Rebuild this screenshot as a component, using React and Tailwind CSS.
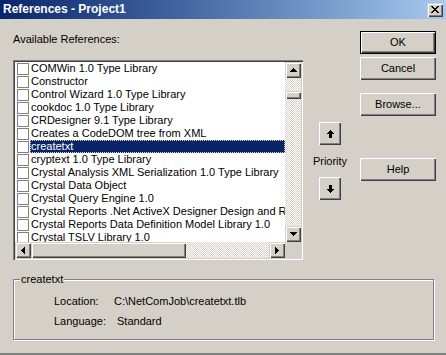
import React from "react";

const refs = [
  "COMWin 1.0 Type Library",
  "Constructor",
  "Control Wizard 1.0 Type Library",
  "cookdoc 1.0 Type Library",
  "CRDesigner 9.1 Type Library",
  "Creates a CodeDOM tree from XML",
  "createtxt",
  "cryptext 1.0 Type Library",
  "Crystal Analysis XML Serialization 1.0 Type Library",
  "Crystal Data Object",
  "Crystal Query Engine 1.0",
  "Crystal Reports .Net ActiveX Designer Design and Runtime",
  "Crystal Reports Data Definition Model Library 1.0",
  "Crystal TSLV Library 1.0",
];

const bevel =
  "shadow-[inset_1px_1px_0_#d4d0c8,inset_2px_2px_0_#ffffff,inset_-1px_-1px_0_#404040,inset_-2px_-2px_0_#808080]";
const btnBevel =
  "shadow-[inset_1px_1px_0_#ffffff,inset_-1px_-1px_0_#404040,inset_-2px_-2px_0_#808080]";
const checker =
  "bg-[repeating-conic-gradient(#d4d0c8_0%_25%,#ffffff_0%_50%)] bg-[length:2px_2px]";

const Pix = ({ w, h, d }) => (
  <svg width={w} height={h} viewBox={`0 0 ${w} ${h}`} shapeRendering="crispEdges">
    <path d={d} fill="#000" />
  </svg>
);

const ArrowUp = () => <Pix w={7} h={4} d="M3 0h1v1h-1z M2 1h3v1h-3z M1 2h5v1h-5z M0 3h7v1h-7z" />;
const ArrowDown = () => <Pix w={7} h={4} d="M0 0h7v1h-7z M1 1h5v1h-5z M2 2h3v1h-3z M3 3h1v1h-1z" />;
const ArrowLeft = () => <Pix w={4} h={7} d="M0 3h1v1h-1z M1 2h1v3h-1z M2 1h1v5h-1z M3 0h1v7h-1z" />;
const ArrowRight = () => <Pix w={4} h={7} d="M0 0h1v7h-1z M1 1h1v5h-1z M2 2h1v3h-1z M3 3h1v1h-1z" />;

const ScrollBtn = ({ children }) => (
  <div className={`w-[16px] h-[16px] shrink-0 bg-[#d4d0c8] flex items-center justify-center ${bevel}`}>
    {children}
  </div>
);

const Button = ({ children, def, className = "" }) => (
  <div className={`w-[76px] h-[23px] bg-[#d4d0c8] ${def ? "border border-black" : ""} ${className}`}>
    <div className={`w-full h-full flex items-center justify-center text-[11px] ${btnBevel}`}>
      {children}
    </div>
  </div>
);

const PriorityBtn = ({ up }) => (
  <div className={`w-[22px] h-[23px] bg-[#d4d0c8] flex items-center justify-center ${btnBevel}`}>
    {up ? (
      <Pix w={7} h={8} d="M3 0h1v1h-1z M2 1h3v1h-3z M1 2h5v1h-5z M0 3h7v1h-7z M2 4h3v4h-3z" />
    ) : (
      <Pix w={7} h={8} d="M2 0h3v4h-3z M0 4h7v1h-7z M1 5h5v1h-5z M2 6h3v1h-3z M3 7h1v1h-1z" />
    )}
  </div>
);

const Row = ({ label, selected }) => (
  <div className="h-[13px] flex items-center shrink-0">
    <div className="w-[12px] h-[12px] ml-[2px] border border-[#808080] bg-white shrink-0" />
    <div
      className={`ml-[1px] h-[13px] flex-1 pl-[1px] leading-[13px] whitespace-nowrap overflow-hidden ${
        selected
          ? "bg-[#0a246a] text-white outline-1 outline-dotted outline-[#e8d890] -outline-offset-1"
          : ""
      }`}
    >
      {label}
    </div>
  </div>
);

export default function App() {
  return (
    <div className="w-[446px] h-[355px] bg-[#d4d0c8] flex flex-col font-['Liberation_Sans',Arial,sans-serif] text-[11px] text-black overflow-hidden shadow-[inset_0_-2px_0_#808080]">
      {/* Title bar */}
      <div className="h-[19px] shrink-0 flex items-center bg-linear-to-r from-[#0a246a] to-[#a6caf0] pl-[3px] pr-[3px]">
        <span className="text-white font-bold text-[12px] leading-[19px] flex-1">References - Project1</span>
        <div className={`w-[16px] h-[14px] bg-[#d4d0c8] flex items-center justify-center ${bevel}`}>
          <Pix
            w={8}
            h={7}
            d="M0 0h2v1h-2z M6 0h2v1h-2z M1 1h2v1h-2z M5 1h2v1h-2z M2 2h4v1h-4z M3 3h2v1h-2z M2 4h4v1h-4z M1 5h2v1h-2z M5 5h2v1h-2z M0 6h2v1h-2z M6 6h2v1h-2z"
          />
        </div>
      </div>

      {/* Body */}
      <div className="flex pl-[13px] shrink-0">
        {/* Left: list */}
        <div className="w-[290px] flex flex-col">
          <div className="mt-[14px] h-[13px] leading-[13px]">Available References:</div>
          <div className="mt-[14px] h-[200px] p-[2px] shadow-[inset_1px_1px_0_#808080,inset_2px_2px_0_#404040,inset_-1px_-1px_0_#ffffff,inset_-2px_-2px_0_#d4d0c8]">
            <div className="w-full h-full flex flex-col bg-white">
              <div className="flex h-[180px]">
                <div className="flex-1 flex flex-col overflow-hidden">
                  {refs.map((r) => (
                    <Row key={r} label={r} selected={r === "createtxt"} />
                  ))}
                </div>
                <div className="w-[16px] flex flex-col">
                  <ScrollBtn>
                    <ArrowUp />
                  </ScrollBtn>
                  <div className={`h-[13px] ${checker}`} />
                  <div className={`h-[8px] bg-[#d4d0c8] ${bevel}`} />
                  <div className={`flex-1 ${checker}`} />
                  <ScrollBtn>
                    <ArrowDown />
                  </ScrollBtn>
                </div>
              </div>
              <div className="flex h-[16px]">
                <ScrollBtn>
                  <ArrowLeft />
                </ScrollBtn>
                <div className={`w-[155px] bg-[#d4d0c8] ${bevel}`} />
                <div className={`flex-1 ${checker}`} />
                <ScrollBtn>
                  <ArrowRight />
                </ScrollBtn>
                <div className="w-[16px] bg-[#d4d0c8]" />
              </div>
            </div>
          </div>
        </div>

        {/* Middle: priority */}
        <div className="w-[57px] flex flex-col items-center pr-[3px]">
          <div className="mt-[103px]">
            <PriorityBtn up />
          </div>
          <div className="mt-[10px] h-[13px] leading-[13px]">Priority</div>
          <div className="mt-[9px]">
            <PriorityBtn />
          </div>
        </div>

        {/* Right: buttons */}
        <div className="flex flex-col">
          <Button def className="mt-[12px]">OK</Button>
          <Button className="mt-[3px]">Cancel</Button>
          <Button className="mt-[13px]">Browse...</Button>
          <Button className="mt-[42px]">Help</Button>
        </div>
      </div>

      {/* Group box */}
      <div className="relative ml-[13px] mt-[19px] w-[421px] h-[61px] border border-[#808080] shadow-[1px_1px_0_#ffffff,inset_1px_1px_0_#ffffff]">
        <span className="absolute left-[6px] -top-[7px] bg-[#d4d0c8] px-[1px] leading-[13px]">createtxt</span>
        <div className="pl-[40px] pt-[15px] flex flex-col gap-[7px]">
          <div className="flex h-[13px] leading-[13px]">
            <span className="w-[60px]">Location:</span>
            <span>C:\NetComJob\createtxt.tlb</span>
          </div>
          <div className="flex h-[13px] leading-[13px]">
            <span className="w-[63px]">Language:</span>
            <span>Standard</span>
          </div>
        </div>
      </div>
    </div>
  );
}
